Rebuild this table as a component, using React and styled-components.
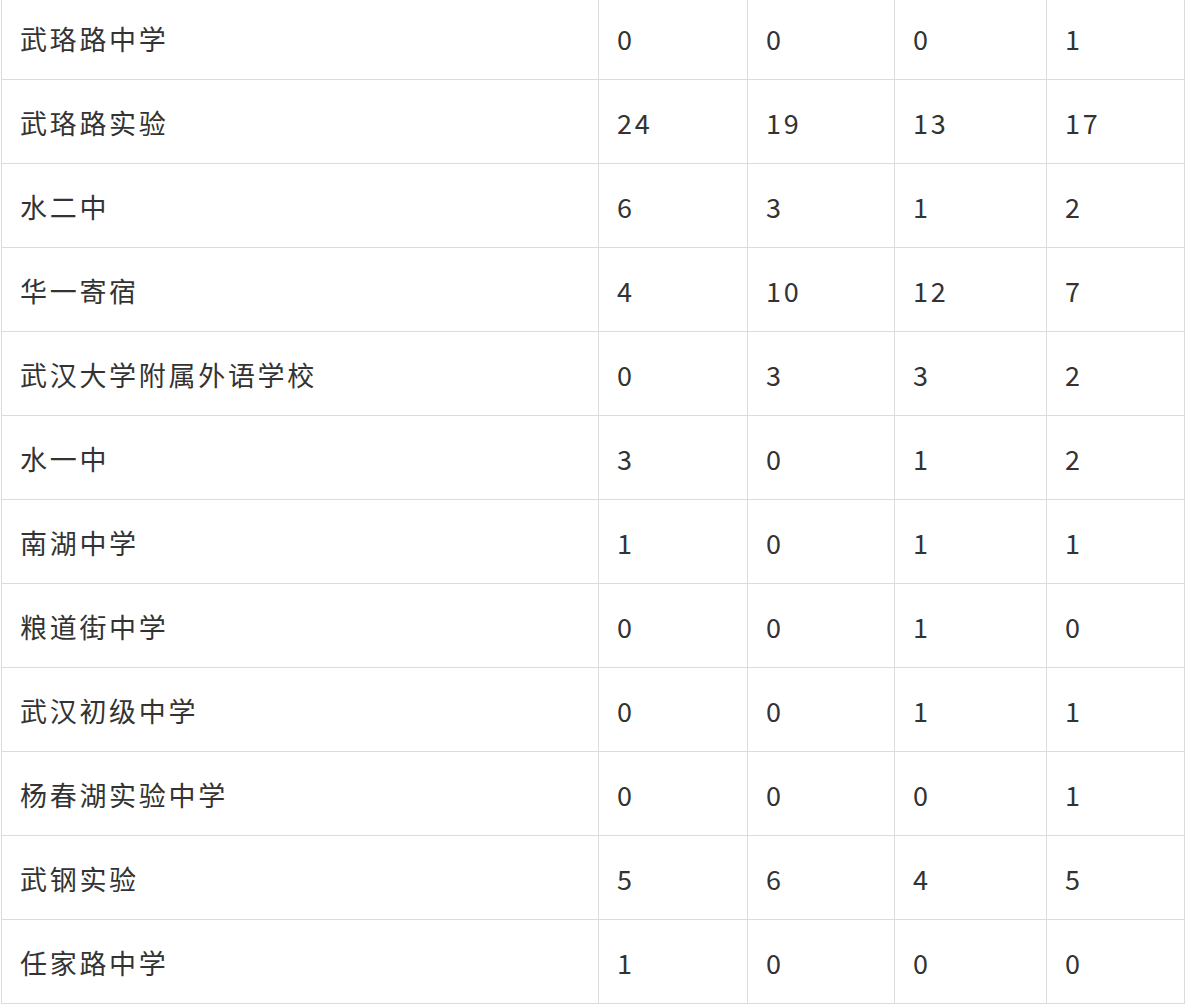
import styled, { createGlobalStyle } from 'styled-components';

const GlobalStyle = createGlobalStyle`
html, body { margin:0; padding:0; background:#fff; }
body { font-family: "Noto Sans CJK SC", "Noto Sans", sans-serif; }
`;

const rows = [
    ['武珞路中学', 0, 0, 0, 1],
    ['武珞路实验', 24, 19, 13, 17],
    ['水二中', 6, 3, 1, 2],
    ['华一寄宿', 4, 10, 12, 7],
    ['武汉大学附属外语学校', 0, 3, 3, 2],
    ['水一中', 3, 0, 1, 2],
    ['南湖中学', 1, 0, 1, 1],
    ['粮道街中学', 0, 0, 1, 0],
    ['武汉初级中学', 0, 0, 1, 1],
    ['杨春湖实验中学', 0, 0, 0, 1],
    ['武钢实验', 5, 6, 4, 5],
    ['任家路中学', 1, 0, 0, 0],
];

const colWidths = [597, 149, 147, 152, 138];

const App = () => {
    return (
        <>
            <GlobalStyle />
            <Page>
                <Table>
                    <colgroup>
                        {colWidths.map((w, i) => <col key={i} style={{width: w}} />)}
                    </colgroup>
                    <tbody>
                        {rows.map((r, i) => (
                            <Row key={i}>
                                {r.map((c, j) => <Cell key={j}>{c}</Cell>)}
                            </Row>
                        ))}
                    </tbody>
                </Table>
            </Page>
        </>
    );
};

const Page = styled.div`
width:1187px; height:1008px;
overflow:hidden;
padding-left:1px;
box-sizing:border-box;
`;
const Table = styled.table`
margin-top:-5px;
width:1184px;
table-layout:fixed;
border-collapse:collapse;
`;
const Row = styled.tr`
height:84px;
`;
const Cell = styled.td`
border:1px solid #dcdcdc;
padding:1px 0 0 18px;
height:84px;
box-sizing:border-box;
vertical-align:middle;
font-size:27px;
letter-spacing:2.7px;
color:#333;
white-space:nowrap;
`;

export default App;
